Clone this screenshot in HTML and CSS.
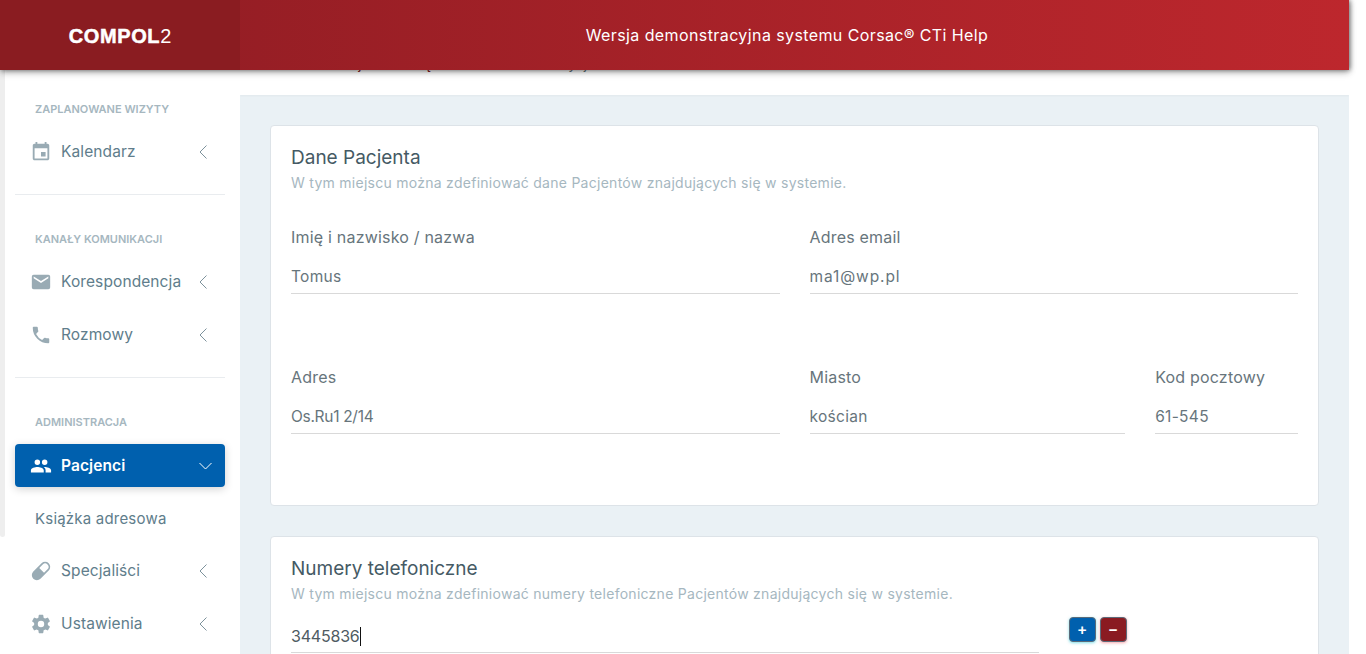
FILE: index.html
```html
<!DOCTYPE html>
<html lang="pl">
<head>
    <meta charset="utf-8">
    <title>Dane Pacjenta</title>
    <link rel="stylesheet" href="styles.css">
</head>
<body>
<div class="wrapper">
    <header class="topbar">
        <div class="brand"><b>COMPOL</b>2</div>
        <div class="topbar-text">Wersja demonstracyjna systemu Corsac® CTi Help</div>
    </header>

    <div class="page">
        <aside class="sidebar">
            <div class="scroll-thumb"></div>
            <div class="nav-label nav-label-first">ZAPLANOWANE WIZYTY</div>
            <a class="nav-item">
                <svg class="nav-icon" viewBox="0 0 24 24"><path d="M17 12h-5v5h5v-5zM16 1v2H8V1H6v2H5c-1.110 0-1.990.9-1.990 2L3 19c0 1.100.89 2 2 2h14c1.100 0 2-.9 2-2V5c0-1.100-.9-2-2-2h-1V1h-2zm3 18H5V8h14v11z"/></svg>
                <span class="nav-text">Kalendarz</span>
                <svg class="nav-arrow" viewBox="0 0 14 14"><path d="M10.500.5 4 7l6.500 6.500"/></svg>
            </a>
            <div class="nav-line"></div>
            <div class="nav-label">KANAŁY KOMUNIKACJI</div>
            <a class="nav-item">
                <svg class="nav-icon" viewBox="0 0 24 24"><path d="M20 4H4a2 2 0 0 0-2 2v12a2 2 0 0 0 2 2h16a2 2 0 0 0 2-2V6a2 2 0 0 0-2-2zm0 4-8 5-8-5V6l8 5 8-5v2z"/></svg>
                <span class="nav-text">Korespondencja</span>
                <svg class="nav-arrow" viewBox="0 0 14 14"><path d="M10.500.5 4 7l6.500 6.500"/></svg>
            </a>
            <a class="nav-item">
                <svg class="nav-icon" viewBox="0 0 24 24"><path d="M6.620 10.790a15.150 15.150 0 0 0 6.590 6.590l2.200-2.200a1 1 0 0 1 1.020-.24c1.120.37 2.330.57 3.570.57a1 1 0 0 1 1 1V20a1 1 0 0 1-1 1A17 17 0 0 1 3 4a1 1 0 0 1 1-1h3.500a1 1 0 0 1 1 1c0 1.250.2 2.450.57 3.570a1 1 0 0 1-.25 1.020l-2.200 2.200z"/></svg>
                <span class="nav-text">Rozmowy</span>
                <svg class="nav-arrow" viewBox="0 0 14 14"><path d="M10.500.5 4 7l6.500 6.500"/></svg>
            </a>
            <div class="nav-line"></div>
            <div class="nav-label">ADMINISTRACJA</div>
            <a class="nav-item nav-item-active">
                <svg class="nav-icon" viewBox="0 0 24 24"><path d="M16 11a3 3 0 1 0 0-6 3 3 0 0 0 0 6zm-8 0a3 3 0 1 0 0-6 3 3 0 0 0 0 6zm0 2c-2.330 0-7 1.170-7 3.500V19h14v-2.500C15 14.170 10.330 13 8 13zm8 0c-.29 0-.62.02-.97.05 1.160.84 1.970 1.970 1.970 3.450V19h6v-2.500c0-2.330-4.670-3.500-7-3.500z"/></svg>
                <span class="nav-text">Pacjenci</span>
                <svg class="nav-arrow nav-arrow-down" viewBox="0 0 14 14"><path d="M1.500 4l6 6 6-6"/></svg>
            </a>
            <a class="nav-sub">Książka adresowa</a>
            <a class="nav-item">
                <svg class="nav-icon" viewBox="0 0 24 24"><path d="M20.400 3.600a5.500 5.500 0 0 0-7.800 0L3.600 12.600a5.500 5.500 0 0 0 7.800 7.800l9-9a5.500 5.500 0 0 0 0-7.800zm-1.300 1.300a3.700 3.700 0 0 1 0 5.200l-3.800 3.800-5.200-5.200 3.800-3.800a3.700 3.700 0 0 1 5.200 0z"/></svg>
                <span class="nav-text">Specjaliści</span>
                <svg class="nav-arrow" viewBox="0 0 14 14"><path d="M10.500.5 4 7l6.500 6.500"/></svg>
            </a>
            <a class="nav-item">
                <svg class="nav-icon" viewBox="0 0 24 24"><path d="M19.430 12.980c.04-.32.07-.64.07-.98s-.03-.66-.07-.98l2.110-1.650a.5.5 0 0 0 .12-.64l-2-3.460a.5.5 0 0 0-.61-.22l-2.490 1a7.300 7.300 0 0 0-1.690-.98l-.38-2.650A.49.49 0 0 0 14 2h-4a.49.49 0 0 0-.49.42l-.38 2.650c-.61.25-1.170.59-1.690.98l-2.490-1a.49.49 0 0 0-.61.22l-2 3.460a.49.49 0 0 0 .12.64l2.110 1.650c-.04.32-.07.65-.07.98s.03.66.07.98l-2.110 1.650a.5.5 0 0 0-.12.64l2 3.460c.12.22.39.3.61.22l2.490-1c.52.4 1.080.73 1.690.98l.38 2.650c.03.24.24.42.49.42h4c.25 0 .46-.18.49-.42l.38-2.650c.61-.25 1.170-.59 1.690-.98l2.490 1c.23.09.49 0 .61-.22l2-3.460a.5.5 0 0 0-.12-.64l-2.110-1.650zM12 15.500a3.500 3.500 0 1 1 0-7 3.500 3.500 0 0 1 0 7z"/></svg>
                <span class="nav-text">Ustawienia</span>
                <svg class="nav-arrow" viewBox="0 0 14 14"><path d="M10.500.5 4 7l6.500 6.500"/></svg>
            </a>
        </aside>

        <main class="content">
            <div class="crumbs"><div class="crumbs-text">Dane Pacjenta - książka <span class="crumbs-muted">adresowa - Edycja</span></div></div>

            <section class="card">
                <h4 class="card-title">Dane Pacjenta</h4>
                <p class="card-sub">W tym miejscu można zdefiniować dane Pacjentów znajdujących się w systemie.</p>
                <div class="form-row form-row-first">
                    <div class="field span-6"><label>Imię i nazwisko / nazwa</label><div class="input">Tomus</div></div>
                    <div class="field span-6"><label>Adres email</label><div class="input input-wide">ma1@wp.pl</div></div>
                </div>
                <div class="form-row">
                    <div class="field span-6"><label>Adres</label><div class="input input-tight">Os.Ru1 2/14</div></div>
                    <div class="field span-4"><label>Miasto</label><div class="input">kościan</div></div>
                    <div class="field span-2"><label>Kod pocztowy</label><div class="input">61-545</div></div>
                </div>
            </section>

            <section class="card card-phones">
                <h4 class="card-title">Numery telefoniczne</h4>
                <p class="card-sub">W tym miejscu można zdefiniować numery telefoniczne Pacjentów znajdujących się w systemie.</p>
                <div class="phone-row">
                    <div class="field span-9"><div class="input input-focus">3445836<span class="caret"></span></div></div>
                    <div class="phone-btns">
                        <button class="btn btn-plus">+</button>
                        <button class="btn btn-minus">−</button>
                    </div>
                </div>
            </section>
        </main>
    </div>
</div>
</body>
</html>
```

FILE: styles.css
```css
html, body {
    margin: 0;
    height: 654px;
    overflow: hidden;
    background: #fff;
}
body {
    font-family: Inter, "Open Sans", sans-serif;
    color: #67757c;
}
.wrapper {
    width: 1349px;
}

/* top bar */
.topbar {
    position: relative;
    z-index: 10;
    display: flex;
    height: 70px;
    background: linear-gradient(90deg, #8e1c23, #bd272d);
    box-shadow: 1px 0 5px rgba(0, 0, 0, .55), 0 3px 7px rgba(0, 0, 0, .22);
    color: #fff;
}
.brand {
    width: 240px;
    line-height: 72px;
    text-align: center;
    font-family: "Liberation Sans", sans-serif;
    font-size: 20px;
    background: #8a1c21;
}
.brand b {
    font-weight: 700;
    letter-spacing: .6px;
    -webkit-text-stroke: .5px #fff;
}
.topbar-text {
    flex: 1;
    text-align: center;
    line-height: 70px;
    font-size: 16px;
    letter-spacing: .4px;
    padding-right: 15px;
}

.page {
    display: flex;
    height: 584px;
}

/* sidebar */
.sidebar {
    position: relative;
    width: 240px;
    flex: none;
    padding: 0 15px;
    box-sizing: border-box;
    background: #fff;
}
.scroll-thumb {
    position: absolute;
    left: 0;
    top: 0;
    width: 5px;
    height: 467px;
    background: #eee;
    border-radius: 0 0 3px 3px;
}
.nav-label {
    padding: 0 20px;
    font-size: 11px;
    line-height: 16px;
    font-weight: 600;
    color: #a6b7bf;
    margin-top: 36px;
}
.nav-label-first {
    margin-top: 31px;
}
.nav-item {
    display: flex;
    align-items: center;
    height: 43px;
    margin-top: 10px;
    padding: 0 15px;
    border-radius: 4px;
    font-size: 15.5px;
    letter-spacing: .1px;
    color: #607d8b;
}
.nav-label + .nav-item {
    margin-top: 13px;
}
.nav-icon {
    width: 22px;
    height: 22px;
    fill: #99abb4;
    flex: none;
}
.nav-text {
    margin-left: 9px;
    flex: 1;
}
.nav-arrow {
    width: 14px;
    height: 14px;
    fill: none;
    stroke: #7d929c;
    stroke-width: 1;
    flex: none;
}
.nav-arrow-down {
    margin-right: -2px;
}
.nav-item-active, .nav-label + .nav-item-active {
    margin-top: 14px;
    background: #0060ae;
    color: #fff;
    font-weight: 600;
    box-shadow: 0 2px 8px rgba(0, 0, 0, .18);
}
.nav-item-active .nav-icon {
    fill: #fff;
}
.nav-item-active .nav-arrow {
    stroke: #fff;
}
.nav-sub {
    display: block;
    height: 43px;
    line-height: 43px;
    margin-top: 10px;
    padding-left: 20px;
    font-size: 15px;
    letter-spacing: .2px;
    color: #607d8b;
}
.nav-sub + .nav-item {
    margin-top: 9px;
}
.nav-line {
    height: 1px;
    margin-top: 21px;
    background: #e9ecef;
}

/* main area */
.content {
    flex: 1;
    background: #eaf1f5;
    min-width: 0;
    overflow: hidden;
}
.crumbs {
    height: 25px;
    margin-bottom: 30px;
    padding-left: 55px;
    background: #fff;
    box-shadow: 0 1px 2px rgba(0, 0, 0, .04);
    font-size: 14px;
    line-height: 0;
    color: #8a1b21;
    white-space: nowrap;
}
.crumbs-text {
    transform: translateY(-6px);
}
.crumbs-muted {
    margin-left: 14px;
    color: #67757c;
}
.card {
    width: 1049px;
    margin: 0 0 30px 30px;
    padding: 20px;
    box-sizing: border-box;
    height: 381px;
    background: #fff;
    border: 1px solid #dde3e8;
    border-radius: 4px;
}
.card-phones {
    height: 200px;
}
.card-title {
    margin: 0;
    font-size: 19px;
    line-height: 24px;
    font-weight: 400;
    color: #455a64;
}
.card-sub {
    margin: 3px 0 0;
    font-size: 14px;
    letter-spacing: .27px;
    line-height: 20px;
    color: #a6b7bf;
}
.form-row, .phone-row {
    display: grid;
    grid-template-columns: repeat(12, 1fr);
    column-gap: 30px;
    margin-top: 72px;
}
.form-row-first {
    margin-top: 33px;
}
.phone-row {
    margin-top: 17px;
}
.span-2 { grid-column: span 2; }
.span-4 { grid-column: span 4; }
.span-6 { grid-column: span 6; }
.span-9 { grid-column: span 9; }
.field label {
    display: block;
    margin-top: -1px;
    font-size: 16px;
    letter-spacing: .2px;
    line-height: 24px;
    color: #67757c;
}
.input {
    height: 31px;
    margin-top: 13px;
    line-height: 30px;
    font-size: 15.5px;
    letter-spacing: .3px;
    color: #67757c;
    border-bottom: 1px solid #d9d9d9;
}
.input-wide {
    letter-spacing: .9px;
}
.input-tight {
    letter-spacing: -.3px;
}
.phone-row .input {
    margin-top: 0;
    height: 31px;
    font-size: 16px;
    letter-spacing: -.2px;
    line-height: 31px;
    color: #4f5b62;
}
.caret {
    display: inline-block;
    width: 1px;
    height: 19px;
    background: #111;
    vertical-align: -4px;
}
.phone-btns {
    grid-column: span 3;
    display: flex;
    gap: 4px;
    align-items: flex-start;
    margin-top: -4px;
}
.btn {
    width: 27px;
    height: 25px;
    padding: 0;
    border: 1px solid #5b6b7a;
    border-radius: 4px;
    color: #fff;
    font-family: "Liberation Sans", sans-serif;
    font-size: 15px;
    font-weight: 700;
    line-height: 20px;
}
.btn-plus {
    background: #0060ae;
    box-shadow: 0 1px 3px rgba(0, 190, 210, .5);
}
.btn-minus {
    background: #8a1b21;
    box-shadow: 0 1px 3px rgba(240, 80, 90, .5);
}
```
